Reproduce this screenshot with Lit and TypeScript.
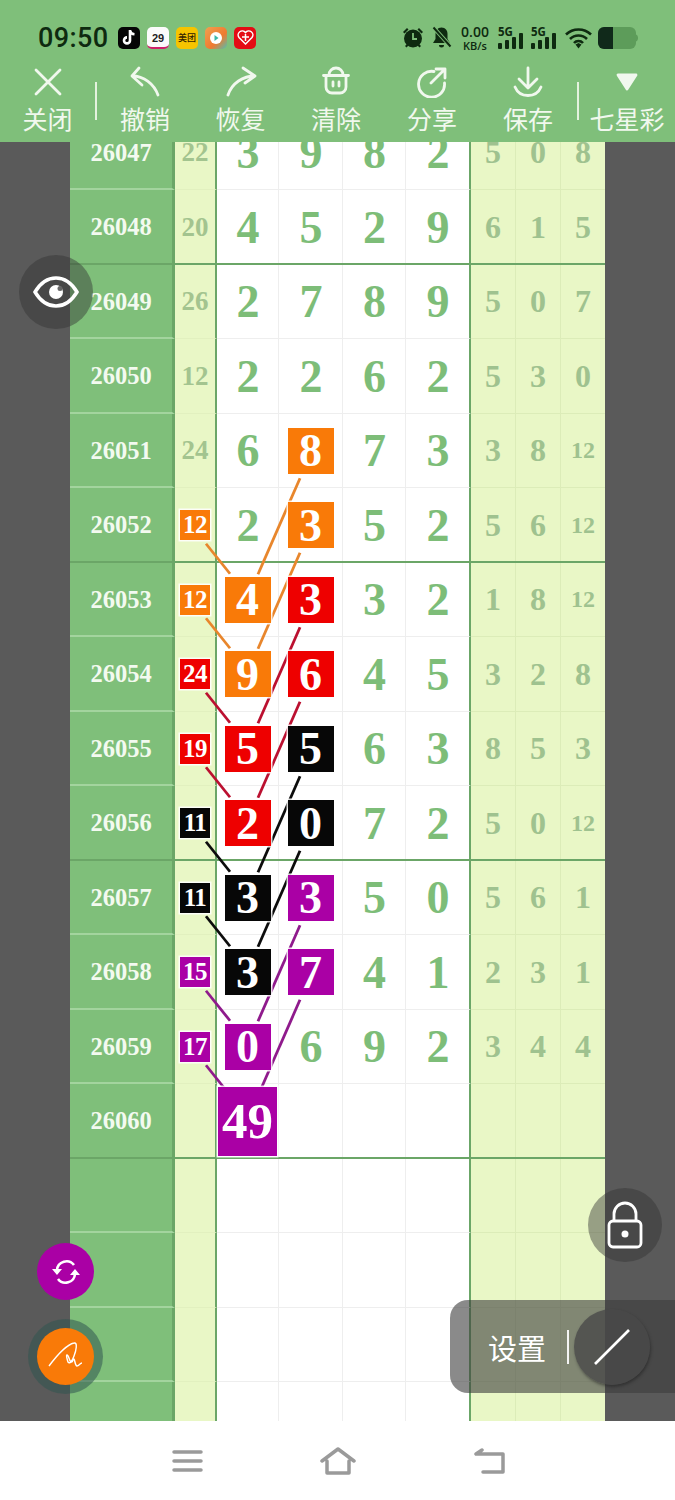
import { LitElement, html, css, svg } from 'lit';
import { customElement } from 'lit/decorators.js';
import { classMap } from 'lit/directives/class-map.js';

type Mark = 'o' | 'r' | 'k' | 'p' | '';

interface Row {
  id: number;
  sum: string;
  nums: string[];
  rest: string[];
  sumMark?: Mark;
  firstMark?: Mark;
  secondMark?: Mark;
}

const ROW_H = 74.5;

const LINE_COLORS: Record<string, string> = {
  o: '#e8862c',
  r: '#bb1030',
  k: '#0c0c0c',
  p: '#8f1a8c',
};

const row = (
  id: number, sum: string, nums: string, rest: string,
  sumMark: Mark = '', firstMark: Mark = '', secondMark: Mark = '',
): Row => ({
  id, sum, nums: nums.split(''), rest: rest.split(' '), sumMark, firstMark, secondMark,
});

const ROWS: Row[] = [
  row(26047, '22', '3982', '5 0 8'),
  row(26048, '20', '4529', '6 1 5'),
  row(26049, '26', '2789', '5 0 7'),
  row(26050, '12', '2262', '5 3 0'),
  row(26051, '24', '6873', '3 8 12', '', '', 'o'),
  row(26052, '12', '2352', '5 6 12', 'o', '', 'o'),
  row(26053, '12', '4332', '1 8 12', 'o', 'o', 'r'),
  row(26054, '24', '9645', '3 2 8', 'r', 'o', 'r'),
  row(26055, '19', '5563', '8 5 3', 'r', 'r', 'k'),
  row(26056, '11', '2072', '5 0 12', 'k', 'r', 'k'),
  row(26057, '11', '3350', '5 6 1', 'k', 'k', 'p'),
  row(26058, '15', '3741', '2 3 1', 'p', 'k', 'p'),
  row(26059, '17', '0692', '3 4 4', 'p', 'p'),
];

@customElement('status-bar')
export class StatusBar extends LitElement {
  static styles = css`
    :host {
      display: flex;
      align-items: center;
      height: 58px;
      padding: 17px 0 0 38px;
      box-sizing: border-box;
      color: #0e2a10;
    }
    .time {
      font: 500 27px Roboto, sans-serif;
      letter-spacing: 0.4px;
      width: 80px;
    }
    .app {
      width: 22px;
      height: 22px;
      border-radius: 5px;
      margin-right: 7px;
      flex: none;
      display: flex;
      align-items: center;
      justify-content: center;
      overflow: hidden;
    }
    .tiktok { background: #050505; }
    .cal {
      background: #fbfbfb;
      color: #222;
      font: 700 11px "Liberation Sans", sans-serif;
      border-bottom: 2px solid #d0206a;
      box-sizing: border-box;
      padding-top: 3px;
    }
    .meituan {
      background: #f6c400;
      color: #332200;
      font: 500 9px "Noto Sans CJK SC", sans-serif;
    }
    .video { background: linear-gradient(135deg, #f0a050, #f07a30 60%, #50c0b0); }
    .heart { background: #e40c14; }
    .right {
      display: flex;
      align-items: center;
      margin-left: auto;
      padding-right: 37px;
    }
    .speed {
      display: flex;
      flex-direction: column;
      align-items: center;
      width: 30px;
      margin: 0 8px 0 8px;
      font-family: "Open Sans", sans-serif;
      font-weight: 600;
      line-height: 1;
    }
    .speed b { font-size: 14px; font-weight: 600; }
    .speed span { font-size: 11px; margin-top: 1px; }
    .signal { position: relative; width: 28px; height: 24px; margin-right: 5px; }
    .signal span {
      position: absolute;
      left: 0;
      top: -2px;
      font: 700 11.5px "Open Sans", sans-serif;
    }
    svg { display: block; }
    .alarm { margin-right: 7px; }
    .wifi { margin: 0 6px 0 1px; }
  `;

  private signal() {
    return html`<div class="signal"><span>5G</span>
      <svg width="28" height="24" viewBox="0 0 28 24" fill="currentColor">
        <rect x="0" y="17" width="4" height="6" rx="1" />
        <rect x="7" y="14" width="4" height="9" rx="1" />
        <rect x="14" y="11" width="4" height="12" rx="1" />
        <rect x="21" y="7" width="4" height="16" rx="1" />
      </svg></div>`;
  }

  render() {
    return html`
      <div class="time">09:50</div>
      <div class="app tiktok">
        <svg width="16" height="17" viewBox="0 0 16 17" fill="none" stroke="#fff" stroke-width="2.6">
          <path d="M9 1v10.4a3 3 0 1 1-3-3M9 1.5c.4 2.2 2 3.6 4.5 3.8" />
        </svg>
      </div>
      <div class="app cal">29</div>
      <div class="app meituan">美团</div>
      <div class="app video">
        <svg width="12" height="12" viewBox="0 0 12 12"><circle cx="6" cy="6" r="6" fill="#fff" /><path d="M4.5 3l4 3-4 3z" fill="#3cb8a8" /></svg>
      </div>
      <div class="app heart">
        <svg width="17" height="15" viewBox="0 0 17 15" fill="none" stroke="#fff" stroke-width="1.5">
          <path d="M8.5 14L2 7.5a3.8 3.8 0 0 1 6.5-5 3.8 3.8 0 0 1 6.5 5zM5 7h7M8.5 4v7" />
        </svg>
      </div>
      <div class="right">
        <svg class="alarm" width="22" height="23" viewBox="0 0 22 23" fill="currentColor">
          <circle cx="11" cy="12.5" r="9" />
          <path d="M1 6l4-4 1.5 1.5-4 4zM21 6l-4-4-1.5 1.5 4 4zM3 20l2-2 1.5 1.5-2 2zM19 20l-2-2-1.5 1.5 2 2z" />
          <path d="M11 7v6h4" fill="none" stroke="#7fbf7a" stroke-width="1.8" />
        </svg>
        <svg width="21" height="23" viewBox="0 0 21 23" fill="currentColor">
          <path d="M10.5 1.5c-4 0-6 3-6 6.5v5l-2.500 4h17l-2.500-4V8c0-3.500-2-6.500-6-6.500zM8 19h5a2.500 2.500 0 0 1-5 0z" />
          <path d="M2 1l18 20" stroke="#7fbf7a" stroke-width="4" />
          <path d="M2.500 1.500l17 19" stroke="currentColor" stroke-width="2" />
        </svg>
        <div class="speed"><b>0.00</b><span>KB/s</span></div>
        ${this.signal()}${this.signal()}
        <svg class="wifi" width="27" height="22" viewBox="0 0 27 22" fill="none" stroke="currentColor" stroke-width="2.600">
          <path d="M1 7.500a18 18 0 0 1 25 0M5 12a12 12 0 0 1 17 0M9 16a6 6 0 0 1 9 0" />
          <path d="M10.500 17.500l3-1.500 3 1.500-3 4z" fill="currentColor" stroke="none" />
        </svg>
        <svg width="40" height="22" viewBox="0 0 40 22">
          <rect x="0" y="0" width="38" height="22" rx="6" fill="#5d9c5a" />
          <path d="M6 0h9v22H6a6 6 0 0 1-6-6V6a6 6 0 0 1 6-6z" fill="#10291a" />
          <path d="M38 7.500c1.300.5 2 1.500 2 3.500s-.7 3-2 3.500z" fill="#5d9c5a" />
        </svg>
      </div>
    `;
  }
}

@customElement('tool-bar')
export class ToolBar extends LitElement {
  static styles = css`
    :host {
      display: flex;
      align-items: flex-start;
      height: 84px;
      color: #f1f8ee;
      font: 400 25px "Noto Sans CJK SC", sans-serif;
    }
    .item {
      width: 96px;
      flex: none;
      display: flex;
      flex-direction: column;
      align-items: center;
    }
    .item.narrow { width: 95px; }
    .item svg {
      display: block;
      width: 32px;
      height: 32px;
      margin-top: 8px;
      fill: none;
      stroke: #f1f8ee;
      stroke-width: 2.800;
      stroke-linecap: round;
      stroke-linejoin: round;
    }
    .item span {
      line-height: 36px;
      white-space: nowrap;
      margin-top: 2px;
    }
    .sep {
      width: 2px;
      height: 38px;
      margin-top: 24px;
      background: #e4f2de;
      flex: none;
    }
    .sep.right { margin-left: 1px; }
  `;

  render() {
    return html`
      <div class="item narrow">
        <svg viewBox="0 0 32 32"><path d="M4 4l24 24M28 4L4 28" /></svg>
        <span>关闭</span>
      </div>
      <div class="sep"></div>
      <div class="item">
        <svg viewBox="0 0 32 32"><path d="M10 2L3 10l10 9M3 10c12 0 22 8 26 19" /></svg>
        <span>撤销</span>
      </div>
      <div class="item narrow">
        <svg viewBox="0 0 32 32"><path d="M18 2l12 8-10 7M30 10C18 10 7 17 3 29" /></svg>
        <span>恢复</span>
      </div>
      <div class="item">
        <svg viewBox="0 0 32 32">
          <path d="M9 9a7 7 0 0 1 14 0M3.500 9.500h25M6 10v11a6 6 0 0 0 6 6h8a6 6 0 0 0 6-6V10M13 16v4M19 16v4" />
        </svg>
        <span>清除</span>
      </div>
      <div class="item">
        <svg viewBox="0 0 32 32"><path d="M18 5.500A13 13 0 1 0 28.500 17M15 17L29 3M20 3h9v9" /></svg>
        <span>分享</span>
      </div>
      <div class="item">
        <svg viewBox="0 0 32 32"><path d="M16 2v20M7 13l9 9 9-9M3 21c2.500 6 7.500 8.500 13 8.500S26.500 27 29 21" /></svg>
        <span>保存</span>
      </div>
      <div class="sep right"></div>
      <div class="item">
        <svg viewBox="0 0 32 32"><path d="M7 9h18l-9 14z" fill="#f1f8ee" /></svg>
        <span>七星彩</span>
      </div>
    `;
  }
}

@customElement('lottery-table')
export class LotteryTable extends LitElement {
  static styles = css`
    :host {
      display: block;
      position: relative;
      width: 535px;
      margin: -26.5px 0 0 70px;
      font-family: "Liberation Serif", serif;
      font-weight: 700;
    }
    .row {
      position: relative;
      display: grid;
      grid-template-columns: 105px 42px 62px 64px 63px 65px 45px 45px 44px;
      height: 74.5px;
    }
    .row.group::after {
      content: '';
      position: absolute;
      left: 0;
      right: 0;
      bottom: -1.5px;
      height: 3px;
      background: #6ba667;
    }
    .cell {
      display: flex;
      align-items: center;
      justify-content: center;
      box-sizing: border-box;
      padding-top: 1px;
      border-bottom: 1px solid #eeeeee;
      border-right: 1px solid #eeeeee;
      background: #fff;
      color: #7dbd78;
      font-size: 46px;
    }
    .num { padding-left: 1px; }
    .id {
      background: #7fbf7a;
      color: #f3faf0;
      font-size: 24.5px;
      padding-top: 2px;
      border-bottom: 2px solid #a3d49e;
      border-right: 3px solid #6ba667;
    }
    .sum {
      background: #e9f7c6;
      color: #a3c48f;
      font-size: 27px;
      border-bottom: 1px solid #e2f0bf;
      border-right: 2px solid #6ba667;
    }
    .last-num { border-right: 2px solid #6ba667; }
    .rest {
      background: #e9f7c6;
      color: #9fc28f;
      font-size: 32px;
      border-bottom: 1px solid #dcecb8;
      border-right: 1px solid #dcecb8;
    }
    .rest.small { font-size: 24px; }
    .rest.end { border-right: 0; }
    .square, .badge, .big {
      position: relative;
      z-index: 2;
      display: flex;
      align-items: center;
      justify-content: center;
      color: #fff;
      box-shadow: 0 0 0 1.5px rgba(255, 255, 255, 0.85);
      flex: none;
    }
    .square { width: 46px; height: 46px; }
    .num .square, .num .big { margin-left: -1px; }
    .badge { width: 30px; height: 30px; font-size: 25px; letter-spacing: -0.5px; }
    .big { width: 59px; height: 69px; font-size: 51px; }
    .o { background: #f97a08; }
    .r { background: #ee0000; }
    .k { background: #070707; }
    .p { background: #aa00a5; }
    svg.links {
      position: absolute;
      left: 0;
      top: 0;
      z-index: 1;
      pointer-events: none;
    }
  `;

  private center(i: number) {
    return (i + 0.5) * ROW_H;
  }

  private links() {
    const out: unknown[] = [];
    ROWS.forEach((r, i) => {
      const c = this.center(i);
      if (r.sumMark) {
        out.push(svg`<line x1="136" y1=${c + 18} x2="160" y2=${c + 48} stroke=${LINE_COLORS[r.sumMark]} />`);
      }
      if (r.firstMark) {
        out.push(svg`<line x1="230" y1=${c - 122} x2="188" y2=${c - 26} stroke=${LINE_COLORS[r.firstMark]} />`);
      }
    });
    // the last draw (26060) has no row data of its own, only the 49 square
    const c = this.center(ROWS.length);
    out.push(svg`<line x1="230" y1=${c - 122} x2="188" y2=${c - 26} stroke=${LINE_COLORS.p} />`);
    return out;
  }

  private numCell(value: string, index: number, r: Row) {
    const mark = index === 0 ? r.firstMark : index === 1 ? r.secondMark : '';
    const classes = classMap({ cell: true, num: true, 'last-num': index === 3 });
    return html`<div class=${classes}>
      ${mark ? html`<div class="square ${mark}">${value}</div>` : value}
    </div>`;
  }

  private dataRow(r: Row, i: number) {
    return html`
      <div class="row ${(i + 3) % 4 === 0 ? 'group' : ''}">
        <div class="cell id">${r.id}</div>
        <div class="cell sum">
          ${r.sumMark ? html`<div class="badge ${r.sumMark}">${r.sum}</div>` : r.sum}
        </div>
        ${r.nums.map((n, k) => this.numCell(n, k, r))}
        ${r.rest.map((v, k) => html`
          <div class="cell rest ${v.length > 1 ? 'small' : ''} ${k === 2 ? 'end' : ''}">${v}</div>
        `)}
      </div>
    `;
  }

  private blankRow(id: string, first: unknown, group: boolean) {
    return html`
      <div class="row ${group ? 'group' : ''}">
        <div class="cell id">${id}</div>
        <div class="cell sum"></div>
        <div class="cell num">${first}</div>
        <div class="cell num"></div>
        <div class="cell num"></div>
        <div class="cell num last-num"></div>
        <div class="cell rest"></div>
        <div class="cell rest"></div>
        <div class="cell rest end"></div>
      </div>
    `;
  }

  render() {
    return html`
      ${ROWS.map((r, i) => this.dataRow(r, i))}
      ${this.blankRow('26060', html`<div class="big p">49</div>`, true)}
      ${[0, 1, 2, 3].map(() => this.blankRow('', '', false))}
      <svg class="links" width="535" height="1300" stroke-width="2.800">${this.links()}</svg>
    `;
  }
}

@customElement('app-root')
export class AppRoot extends LitElement {
  static styles = css`
    :host {
      display: block;
      position: relative;
      width: 675px;
      height: 1500px;
      overflow: hidden;
      background: #fff;
    }
    .top { background: #7fbf7a; position: relative; z-index: 3; }
    .main {
      height: 1279px;
      background: #5a5a5a;
      overflow: hidden;
    }
    .float {
      position: absolute;
      z-index: 4;
      border-radius: 50%;
      display: flex;
      align-items: center;
      justify-content: center;
      box-sizing: border-box;
    }
    .shade { background: rgba(50, 50, 50, 0.45); width: 74px; height: 74px; }
    .eye { left: 19px; top: 255px; }
    .lock { left: 588px; top: 1188px; }
    .sync { left: 37px; top: 1243px; width: 57px; height: 57px; background: #aa00a5; }
    .pen-ring {
      left: 28px;
      top: 1319px;
      width: 75px;
      height: 75px;
      background: rgba(50, 85, 80, 0.55);
    }
    .pen {
      width: 57px;
      height: 57px;
      border-radius: 50%;
      background: #f97a08;
      display: flex;
      align-items: center;
      justify-content: center;
    }
    .settings {
      position: absolute;
      z-index: 4;
      left: 450px;
      top: 1300px;
      width: 225px;
      height: 93px;
      border-radius: 18px 0 0 18px;
      background: rgba(60, 60, 60, 0.6);
      display: flex;
      align-items: center;
      color: #fff;
      font: 400 29px "Noto Sans CJK SC", sans-serif;
      padding-left: 38px;
      box-sizing: border-box;
    }
    .settings i {
      width: 2px;
      height: 34px;
      background: #f3f3f3;
      margin: 0 0 0 21px;
    }
    .pencil {
      width: 76px;
      height: 76px;
      border-radius: 50%;
      background: rgba(72, 72, 72, 0.8);
      box-shadow: 1px 2px 3px rgba(30, 30, 30, 0.5);
      margin-left: 5px;
      flex: none;
      display: flex;
      align-items: center;
      justify-content: center;
    }
    .nav {
      height: 79px;
      background: #fff;
      display: flex;
      align-items: center;
      padding-left: 172px;
    }
    .nav svg {
      display: block;
      fill: none;
      stroke: #9a9a9a;
      stroke-width: 3.500;
      stroke-linecap: round;
      stroke-linejoin: round;
    }
    .nav .home { margin: 0 118px 0 117px; }
    svg.icon { display: block; fill: none; stroke: #fff; }
  `;

  render() {
    return html`
      <div class="top">
        <status-bar></status-bar>
        <tool-bar></tool-bar>
      </div>
      <div class="main">
        <lottery-table></lottery-table>
      </div>
      <div class="nav">
        <svg width="31" height="24" viewBox="0 0 31 24"><path d="M2 3h27M2 12h27M2 21h27" /></svg>
        <svg class="home" width="36" height="28" viewBox="0 0 36 28"><path d="M2 14L18 2l16 12M7 14v12h22V14" /></svg>
        <svg width="32" height="26" viewBox="0 0 32 26"><path d="M2 6h27v18H9M2 6l6-4" /></svg>
      </div>

      <div class="float shade eye">
        <svg class="icon" width="46" height="34" viewBox="0 0 46 34" stroke-width="3.500">
          <path d="M2 17C8 7 15 3 23 3s15 4 21 14c-6 10-13 14-21 14S8 27 2 17z" />
          <circle cx="23" cy="17" r="7" fill="#fff" stroke="none" />
          <circle cx="27" cy="13.500" r="2.500" fill="#666" stroke="none" />
        </svg>
      </div>
      <div class="float shade lock">
        <svg class="icon" width="36" height="48" viewBox="0 0 36 48" stroke-width="2.800">
          <path d="M7 20V13a11 11 0 0 1 22 0v7" />
          <rect x="2" y="20" width="32" height="26" rx="4" />
          <circle cx="18" cy="33" r="3.500" fill="#fff" stroke="none" />
        </svg>
      </div>
      <div class="float sync">
        <svg class="icon" width="32" height="28" viewBox="0 0 32 28" stroke-width="2.600">
          <path d="M7 12a9.500 9.500 0 0 1 17-5M25 16a9.500 9.500 0 0 1-17 5" />
          <path d="M2 11h10l-5 6zM20 17h10l-5-6z" fill="#fff" stroke="none" />
        </svg>
      </div>
      <div class="float pen-ring">
        <div class="pen">
          <svg class="icon" width="38" height="38" viewBox="0 0 38 38" stroke="#ffe2b4" stroke-width="1.400">
            <path d="M2 28C8 20 18 7 27 5c4-1 2 8 0 13-1 3-4 9-6 6-1-3-2-7-1-7 2 0 2 6 4 7 2 1 2-4 3-3 1 1 1 7 3 7 2 0 3-3 5-3" />
          </svg>
        </div>
      </div>
      <div class="settings">
        <span>设置</span><i></i>
        <div class="pencil">
          <svg class="icon" width="38" height="38" viewBox="0 0 38 38" stroke-width="2.600">
            <path d="M2 36L36 2" />
          </svg>
        </div>
      </div>
    `;
  }
}
